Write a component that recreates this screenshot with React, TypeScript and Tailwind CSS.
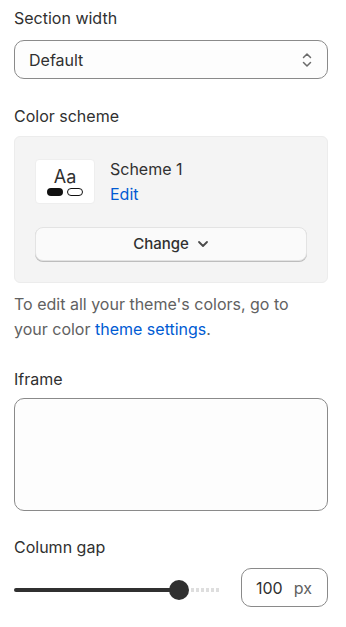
import React from "react";

export default function App() {
  return (
    <div className="w-[346px] h-[627px] bg-white overflow-hidden text-[#303030]" style={{ fontFamily: "Inter, 'Noto Sans', sans-serif" }}>
      <div className="pl-[14px] pr-[18px] pt-[7px]">
        <div className="text-[16px] leading-[22px]">Section width</div>
        <div className="mt-[11px] h-[39px] rounded-[10px] border border-[#8a8a8a] bg-[#fdfdfd] flex items-center justify-between pl-[14px] pr-[14px]">
          <span className="text-[16px]">Default</span>
          <svg width="12" height="18" viewBox="0 0 12 18" fill="none" stroke="#6b6b6b" strokeWidth="1.5" strokeLinecap="round" strokeLinejoin="round">
            <path d="M2.5 6.5 L6 3 L9.5 6.5" />
            <path d="M2.5 11.5 L6 15 L9.5 11.5" />
          </svg>
        </div>

        <div className="mt-[26px] text-[16px] leading-[22px]">Color scheme</div>
        <div className="mt-[9px] h-[147px] rounded-[6px] bg-[#f4f4f4] border border-[#ececec] px-[20px] pt-[22px]">
          <div className="flex items-start">
            <div className="w-[60px] h-[45px] bg-white rounded-[4px] border border-[#eeeeee] flex flex-col items-center justify-center">
              <div className="text-[18px] leading-[19px] text-[#303030]">Aa</div>
              <div className="flex items-center gap-[4px] mt-[2px]">
                <div className="w-[16px] h-[8px] rounded-full bg-[#111]" />
                <div className="w-[16px] h-[8px] rounded-full border-[1.5px] border-[#111]" />
              </div>
            </div>
            <div className="ml-[15px] -mt-[1px]">
              <div className="text-[16px] leading-[22px]">Scheme 1</div>
              <div className="text-[16px] leading-[22px] text-[#005bd3] mt-[3px]">Edit</div>
            </div>
          </div>
          <div className="mt-[22px] h-[34px] rounded-[8px] bg-[#fafafa] border border-[#e3e3e3] shadow-[0_1px_0_#bdbdbd] flex items-center justify-center gap-[8px]">
            <span className="text-[15px] font-medium text-[#303030]">Change</span>
            <svg width="12" height="8" viewBox="0 0 12 8" fill="none" stroke="#4a4a4a" strokeWidth="1.8" strokeLinecap="round" strokeLinejoin="round">
              <path d="M2 2 L6 6 L10 2" />
            </svg>
          </div>
        </div>

        <div className="mt-[9px] text-[16px] leading-[25px] text-[#616161]">
          <div>To edit all your theme's colors, go to</div>
          <div className="flex">
            <span className="whitespace-pre">your color </span>
            <span className="text-[#005bd3]">theme settings</span>
            <span>.</span>
          </div>
        </div>

        <div className="mt-[26px] text-[16px] leading-[22px]">Iframe</div>
        <div className="mt-[8px] h-[113px] rounded-[10px] border border-[#8a8a8a] bg-[#fdfdfd]" />

        <div className="mt-[25px] text-[16px] leading-[22px]">Column gap</div>
        <div className="mt-[10px] flex items-center justify-between">
          <div className="relative w-[210px] h-[24px] mt-[4px] flex items-center">
            <div className="h-[4px] w-[165px] rounded-full bg-[#303030]" />
            <div className="ml-[12px] w-[30px] h-[4px] bg-[repeating-linear-gradient(90deg,#dedede_0_3px,transparent_3px_5px)]" />
            <div className="absolute left-[155px] top-[2px] w-[20px] h-[20px] rounded-full bg-[#303030]" />
          </div>
          <div className="w-[87px] h-[39px] rounded-[10px] border border-[#8a8a8a] flex items-center pl-[14px] text-[16px]">
            <span>100</span>
            <span className="ml-[11px] text-[#616161]">px</span>
          </div>
        </div>
      </div>
    </div>
  );
}
